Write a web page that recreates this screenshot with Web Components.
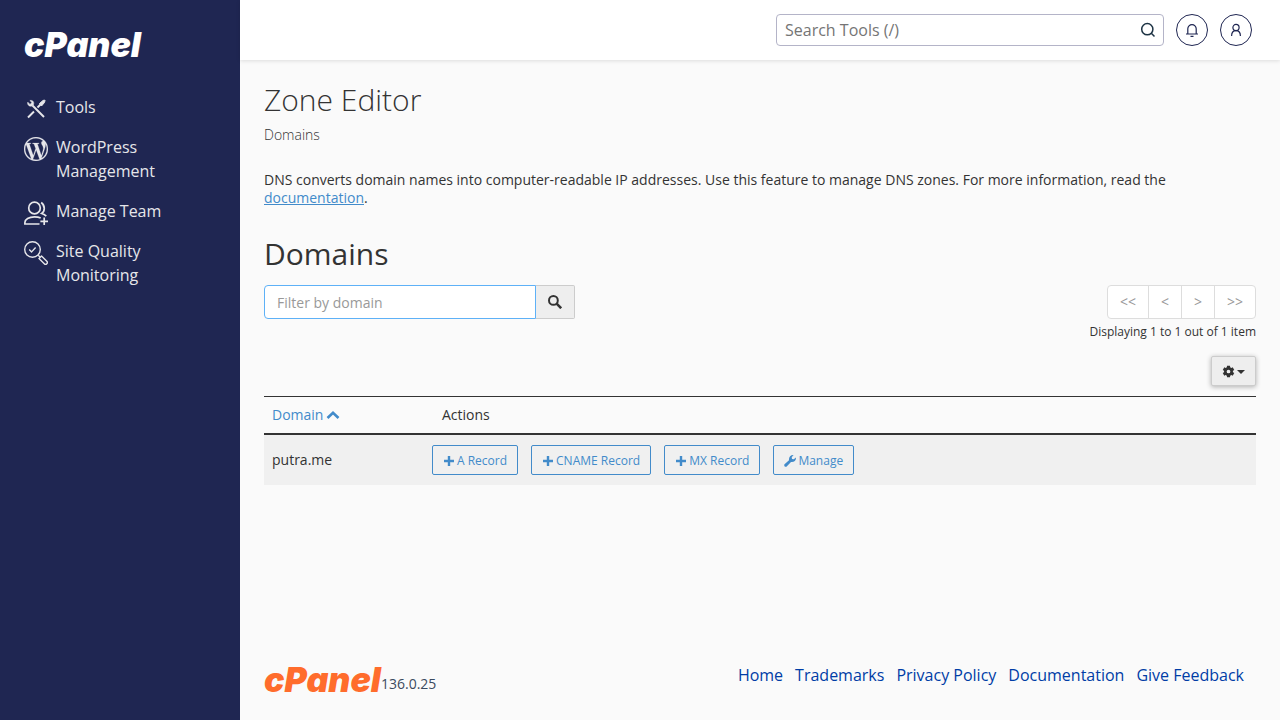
<!DOCTYPE html>
<html lang="en">
<head>
<meta charset="utf-8">
<meta name="viewport" content="width=device-width, initial-scale=1">
<title>cPanel - Zone Editor</title>
<style>
  body {
    margin: 0;
    background: #fafafa;
    color: #333;
    font-family: "Open Sans", "Noto Sans", sans-serif;
    font-size: 14px;
    line-height: 18px;
  }
</style>
</head>
<body>
<app-shell>
  <side-nav slot="nav">
    <nav-item icon="tools" href="#tools">Tools</nav-item>
    <nav-item icon="wordpress" href="#wordpress">WordPress Management</nav-item>
    <nav-item icon="team" href="#team">Manage Team</nav-item>
    <nav-item icon="quality" href="#quality">Site Quality Monitoring</nav-item>
  </side-nav>
  <top-bar slot="header"></top-bar>
  <page-heading heading="Zone Editor" sub="Domains">
    DNS converts domain names into computer-readable IP addresses. Use this feature to manage DNS zones. For more information, read the
    <a slot="link" href="#documentation">documentation</a>
  </page-heading>
  <domain-list></domain-list>
  <page-footer slot="footer" version="136.0.25"></page-footer>
</app-shell>

<script>
/* Icon markup, keyed by name: [viewBox, svg content] */
const ICONS = {
  tools: ["0 0 24 24", `
    <g fill="none" stroke="currentColor" stroke-width="2">
      <path d="M8.500 8.500 20 20"/>
      <path d="M4 20.500 10 14.500"/>
      <path d="M13.500 10.500 17 7"/>
    </g>
    <path d="M15.500 6.500 19 3.500l1.500-.5.500.500-.5 2L17.500 9z" fill="currentColor" stroke="currentColor" stroke-width="1"/>
    <path d="M3.800 5.200 6 7.400 8 5.600 5.900 3.600C8 2.800 10.300 4.500 9.600 7.200 9 9.600 5.500 9.800 4.300 8 3.600 7.100 3.500 6.100 3.800 5.200z" fill="currentColor" stroke="currentColor" stroke-width=".6"/>`],
  wordpress: ["0 0 24 24", `<path fill="currentColor" stroke="currentColor" stroke-width=".2" d="M21.469 6.825c.84 1.537 1.318 3.300 1.318 5.175 0 3.979-2.156 7.456-5.363 9.325l3.295-9.527c.615-1.540.820-2.771.820-3.864 0-.405-.026-.780-.070-1.110m-7.981.105c.647-.030 1.232-.105 1.232-.105.582-.075.514-.930-.067-.899 0 0-1.755.135-2.880.135-1.064 0-2.850-.150-2.850-.150-.585-.030-.661.855-.075.885 0 0 .540.061 1.125.090l1.680 4.605-2.370 7.080L5.354 6.900c.649-.030 1.234-.100 1.234-.100.585-.075.516-.930-.065-.896 0 0-1.746.138-2.874.138-.200 0-.438-.008-.690-.015C4.911 3.150 8.235 1.215 12 1.215c2.809 0 5.365 1.072 7.286 2.833-.046-.003-.091-.009-.141-.009-1.060 0-1.812.923-1.812 1.914 0 .890.513 1.643 1.060 2.531.411.720.890 1.643.890 2.977 0 .915-.354 1.994-.821 3.479l-1.075 3.585-3.900-11.610.001.014zM12 22.784c-1.059 0-2.081-.153-3.048-.437l3.237-9.406 3.315 9.087c.024.053.050.101.078.149-1.120.393-2.325.609-3.582.609M1.211 12c0-1.564.336-3.050.935-4.390L7.290 21.709C3.694 19.960 1.212 16.271 1.211 12M12 0C5.385 0 0 5.385 0 12s5.385 12 12 12 12-5.385 12-12S18.615 0 12 0"/>`],
  team: ["0 0 24 24", `
    <g fill="none" stroke="currentColor" stroke-width="1.700">
      <circle cx="10.500" cy="7" r="5.800"/>
      <path d="M15.500 23H.900v-1.500c0-3.200 4-5.700 9.600-5.700 2.400 0 4.500.400 6.200 1.200"/>
      <path d="M17.200 1.500c4 3 4 8.500.5 11 2 .6 3.300 1.500 4.600 2.700"/>
      <path d="M20.200 16.500V24M16.400 20.300H24"/>
    </g>`],
  quality: ["0 0 24 24", `
    <g fill="none" stroke="currentColor" stroke-width="1.400" stroke-linejoin="round">
      <circle cx="8.500" cy="8.500" r="7.800"/>
      <path d="M5.200 8.600 7.600 10.900 11.600 6.500"/>
      <path d="M14.200 14.200 16 16"/>
      <path d="M15 17.500 17.500 15l5.300 5.300a1.700 1.700 0 0 1-2.500 2.500z"/>
    </g>`],
  search: ["0 0 16 16", `
    <g fill="none" stroke="currentColor" stroke-width="1.500">
      <circle cx="7.300" cy="7.200" r="5.600"/>
      <path d="m11.300 11.300 3.200 3.200"/>
    </g>`],
  bell: ["0 0 16 16", `
    <g fill="none" stroke="currentColor" stroke-width="1.200">
      <path d="M3.800 12V6.800a4.200 4.200 0 0 1 8.400 0V12"/>
      <path d="M2 12h12M6.500 14.300h3"/>
    </g>`],
  user: ["0 0 16 16", `
    <g fill="none" stroke="currentColor" stroke-width="1.200">
      <circle cx="8" cy="5.500" r="3.100"/>
      <path d="M3.600 14c0-3 1.600-5.300 4.400-5.300s4.400 2.300 4.400 5.300"/>
    </g>`],
  filter: ["0 0 14 14", `
    <g fill="none" stroke="currentColor">
      <circle cx="5.400" cy="5.400" r="4.400" stroke-width="2"/>
      <path d="m8.600 8.600 4.600 4.600" stroke-width="2.600"/>
    </g>`],
  cog: ["0 0 14 14", `
    <g fill="currentColor">
      <path d="M5.300.8h3.400v12.400H5.300z"/>
      <path d="M5.300.8h3.400v12.400H5.300z" transform="rotate(60 7 7)"/>
      <path d="M5.300.8h3.400v12.400H5.300z" transform="rotate(120 7 7)"/>
    </g>
    <circle cx="7" cy="7" r="3.400" fill="#eee" stroke="currentColor" stroke-width="2.800"/>`],
  caret: ["0 0 8 4", `<path d="M0 0h8L4 4z" fill="currentColor"/>`],
  up: ["0 0 14 14", `<path d="m1.500 10 5.500-5.300L12.500 10" fill="none" stroke="currentColor" stroke-width="2.600"/>`],
  plus: ["0 0 12 12", `<path d="M6 1v10M1 6h10" fill="none" stroke="currentColor" stroke-width="2.400"/>`],
  wrench: ["0 0 12 12", `<path d="M.500 9.300 5 5.200C4.600 2.300 6.600-.100 9.600.100L7.700 2.200l.300 1.800 1.800.300L11.900 2.400c.500 3-1.800 5.100-4.900 4.600L2.700 11.500C1.300 12.500-.500 10.700.500 9.300z" fill="currentColor"/>`],
};

/**
 * Small helper base: renders template() into an open shadow root.
 */
class BaseElement extends HTMLElement {
  constructor() {
    super();
    this.attachShadow({ mode: "open" });
  }

  connectedCallback() {
    this.shadowRoot.innerHTML = this.template();
  }
}

class UiIcon extends BaseElement {
  template() {
    const [box, body] = ICONS[this.getAttribute("name")];
    return `
      <style>
        :host {
          display: inline-block;
          width: 16px;
          height: 16px;
          flex-shrink: 0;
        }
        svg {
          display: block;
          width: 100%;
          height: 100%;
        }
      </style>
      <svg viewBox="${box}" aria-hidden="true">${body}</svg>
    `;
  }
}

/** cPanel wordmark, coloured by its parent */
class BrandLogo extends BaseElement {
  template() {
    return `
      <style>
        :host {
          display: block;
          font: italic 900 34px/26px Inter, "Open Sans", sans-serif;
        }
      </style>
      cPanel
    `;
  }
}

class AppShell extends BaseElement {
  template() {
    return `
      <style>
        :host {
          display: flex;
          min-height: 100vh;
        }
        .page {
          flex: 1;
          min-width: 0;
          display: flex;
          flex-direction: column;
        }
        main {
          flex: 1;
          padding: 24px 24px 0;
        }
      </style>
      <slot name="nav"></slot>
      <div class="page">
        <slot name="header"></slot>
        <main><slot></slot></main>
        <slot name="footer"></slot>
      </div>
    `;
  }
}

class SideNav extends BaseElement {
  template() {
    return `
      <style>
        :host {
          display: block;
          box-sizing: border-box;
          width: 240px;
          flex-shrink: 0;
          padding: 32px 24px;
          background: #1f2652;
          color: #fff;
        }
        .brand {
          display: block;
          color: inherit;
          text-decoration: none;
        }
        nav {
          display: flex;
          flex-direction: column;
          gap: 16px;
          margin-top: 37px;
        }
      </style>
      <a class="brand" href="#home"><brand-logo></brand-logo></a>
      <nav><slot></slot></nav>
    `;
  }
}

class NavItem extends BaseElement {
  template() {
    return `
      <style>
        :host {
          display: block;
        }
        a {
          display: flex;
          gap: 8px;
          color: #e6e6ea;
          font-size: 16px;
          line-height: 24px;
          text-decoration: none;
        }
        /* icon hangs slightly below the first text line */
        ui-icon {
          width: 24px;
          height: 24px;
          margin: 2px 0 -2px;
        }
      </style>
      <a href="${this.getAttribute("href")}">
        <ui-icon name="${this.getAttribute("icon")}"></ui-icon>
        <span><slot></slot></span>
      </a>
    `;
  }
}

class TopBar extends BaseElement {
  template() {
    return `
      <style>
        :host {
          display: flex;
          justify-content: flex-end;
          align-items: center;
          gap: 12px;
          box-sizing: border-box;
          height: 60px;
          padding: 0 28px;
          background: #fff;
          box-shadow: 0 1px 4px rgba(0, 0, 0, 0.12);
        }
        .search {
          display: flex;
          align-items: center;
          box-sizing: border-box;
          width: 388px;
          height: 32px;
          padding: 0 7px 0 8px;
          border: 1px solid #b4b4c8;
          border-radius: 4px;
          color: #1d3344;
        }
        input {
          flex: 1;
          min-width: 0;
          padding: 0;
          border: 0;
          outline: 0;
          background: none;
          font: inherit;
          font-size: 16px;
          line-height: 24px;
        }
        input::placeholder {
          color: #757575;
        }
        button {
          display: flex;
          align-items: center;
          justify-content: center;
          padding: 0;
          border: 0;
          background: none;
          color: inherit;
        }
        .round {
          width: 32px;
          height: 32px;
          border: 1px solid #1f2652;
          border-radius: 50%;
          background: #fff;
          color: #1f2652;
        }
      </style>
      <div class="search">
        <input type="text" placeholder="Search Tools (/)" aria-label="Search Tools">
        <button type="button" aria-label="Search"><ui-icon name="search"></ui-icon></button>
      </div>
      <button class="round" type="button" aria-label="Notifications"><ui-icon name="bell"></ui-icon></button>
      <button class="round" type="button" aria-label="Account"><ui-icon name="user"></ui-icon></button>
    `;
  }
}

class PageHeading extends BaseElement {
  template() {
    return `
      <style>
        :host {
          display: block;
        }
        h1 {
          margin: 0;
          font-size: 30px;
          font-weight: 300;
          line-height: 32px;
        }
        .sub {
          margin-top: 10px;
          font-weight: 300;
        }
        p {
          margin: 27px 0 0;
        }
        ::slotted(a) {
          color: #428bca;
        }
      </style>
      <h1>${this.getAttribute("heading")}</h1>
      <div class="sub">${this.getAttribute("sub")}</div>
      <p><slot></slot><slot name="link"></slot>.</p>
    `;
  }
}

class DomainList extends BaseElement {
  template() {
    return `
      <style>
        :host {
          display: block;
          margin-top: 30px;
        }
        h2 {
          margin: 0;
          font-size: 30px;
          font-weight: 500;
          line-height: 34px;
        }
        .bar {
          display: flex;
          justify-content: space-between;
          align-items: flex-start;
          margin-top: 14px;
        }
        .settings {
          display: flex;
          justify-content: flex-end;
          margin: 16px 0 10px;
        }
        .settings button {
          display: flex;
          align-items: center;
          gap: 2px;
          height: 30px;
          padding: 0 10px;
          border: 1px solid #ccc;
          border-radius: 2px;
          background: #eee;
          box-shadow: 0 1px 5px rgba(0, 0, 0, 0.3);
          color: #333;
        }
        .settings ui-icon {
          width: 13px;
          height: 13px;
        }
        .settings .caret {
          width: 8px;
          height: 4px;
          margin-top: 2px;
        }
      </style>
      <h2>Domains</h2>
      <div class="bar">
        <domain-filter></domain-filter>
        <list-pager></list-pager>
      </div>
      <div class="settings">
        <button type="button" aria-label="Table settings">
          <ui-icon name="cog"></ui-icon><ui-icon class="caret" name="caret"></ui-icon>
        </button>
      </div>
      <domain-table></domain-table>
    `;
  }
}

class DomainFilter extends BaseElement {
  template() {
    return `
      <style>
        :host {
          display: flex;
          width: 311px;
          height: 34px;
        }
        input {
          flex: 1;
          min-width: 0;
          box-sizing: border-box;
          padding: 7px 12px 5px;
          border: 1px solid #5eb1f7;
          border-radius: 4px 0 0 4px;
          outline: 0;
          background: #fff;
          font: inherit;
        }
        input::placeholder {
          color: #999;
        }
        button {
          display: flex;
          align-items: center;
          justify-content: center;
          width: 39px;
          padding: 0;
          border: 1px solid #ccc;
          border-left: 0;
          border-radius: 0 2px 2px 0;
          background: #eee;
          color: #333;
        }
        ui-icon {
          width: 14px;
          height: 14px;
        }
      </style>
      <input type="text" placeholder="Filter by domain" aria-label="Filter by domain">
      <button type="button" aria-label="Filter"><ui-icon name="filter"></ui-icon></button>
    `;
  }
}

class ListPager extends BaseElement {
  template() {
    const buttons = [["&lt;&lt;", "First"], ["&lt;", "Previous"], ["&gt;", "Next"], ["&gt;&gt;", "Last"]]
      .map(([text, label]) => `<button type="button" disabled aria-label="${label}">${text}</button>`)
      .join("");

    return `
      <style>
        :host {
          display: flex;
          flex-direction: column;
          align-items: flex-end;
          gap: 4px;
        }
        .pages {
          display: flex;
          border: 1px solid #ddd;
          border-radius: 4px;
          background: #fff;
          overflow: hidden;
        }
        button {
          height: 32px;
          padding: 0 12px;
          border: 0;
          background: none;
          color: #999;
          font: inherit;
        }
        button + button {
          border-left: 1px solid #ddd;
        }
        .count {
          font-size: 12px;
          line-height: 17px;
        }
      </style>
      <div class="pages">${buttons}</div>
      <div class="count">Displaying 1 to 1 out of 1 item</div>
    `;
  }
}

class DomainTable extends BaseElement {
  template() {
    return `
      <style>
        :host {
          display: block;
        }
        table {
          width: 100%;
          border-collapse: separate;
          border-spacing: 0;
        }
        th {
          padding: 9px 8px 10px;
          border-top: 1px solid #333;
          border-bottom: 2px solid #333;
          font-weight: 400;
          line-height: 17px;
          text-align: left;
        }
        th:first-child {
          width: 144px;
        }
        th:last-child {
          padding-left: 18px;
        }
        th a {
          display: inline-flex;
          align-items: center;
          gap: 3px;
          color: #428bca;
          text-decoration: none;
        }
        th ui-icon {
          width: 14px;
          height: 14px;
        }
        td {
          padding: 10px 8px;
          background: #f0f0f0;
        }
        .actions {
          display: flex;
          flex-wrap: wrap;
          gap: 13px;
        }
      </style>
      <table>
        <thead>
          <tr>
            <th scope="col" aria-sort="ascending"><a href="#sort">Domain<ui-icon name="up"></ui-icon></a></th>
            <th scope="col">Actions</th>
          </tr>
        </thead>
        <tbody>
          <tr>
            <td>putra.me</td>
            <td>
              <div class="actions">
                <record-action icon="plus">A Record</record-action>
                <record-action icon="plus">CNAME Record</record-action>
                <record-action icon="plus">MX Record</record-action>
                <record-action icon="wrench">Manage</record-action>
              </div>
            </td>
          </tr>
        </tbody>
      </table>
    `;
  }
}

class RecordAction extends BaseElement {
  template() {
    return `
      <style>
        :host {
          display: block;
        }
        button {
          display: flex;
          align-items: center;
          gap: 2px;
          height: 30px;
          padding: 2px 10px 0;
          border: 1px solid #428bca;
          border-radius: 2px;
          background: none;
          color: #428bca;
          font: inherit;
          font-size: 12px;
        }
        ui-icon {
          width: 12px;
          height: 12px;
        }
      </style>
      <button type="button"><ui-icon name="${this.getAttribute("icon")}"></ui-icon><slot></slot></button>
    `;
  }
}

class PageFooter extends BaseElement {
  template() {
    const links = ["Home", "Trademarks", "Privacy Policy", "Documentation", "Give Feedback"]
      .map((text) => `<a href="#${text.toLowerCase().replace(" ", "-")}">${text}</a>`)
      .join("");

    return `
      <style>
        :host {
          display: flex;
          justify-content: space-between;
          align-items: flex-start;
          padding: 0 36px 27px 24px;
        }
        .brand {
          display: flex;
          align-items: flex-end;
          padding-top: 4px;
          color: #3a4a5e;
        }
        brand-logo {
          color: #ff6c2c;
        }
        nav {
          display: flex;
          flex-wrap: wrap;
          gap: 12px;
        }
        a {
          color: #003da6;
          font-size: 16px;
          line-height: 24px;
          text-decoration: none;
        }
      </style>
      <div class="brand"><brand-logo></brand-logo><span>${this.getAttribute("version")}</span></div>
      <nav>${links}</nav>
    `;
  }
}

customElements.define("ui-icon", UiIcon);
customElements.define("brand-logo", BrandLogo);
customElements.define("app-shell", AppShell);
customElements.define("side-nav", SideNav);
customElements.define("nav-item", NavItem);
customElements.define("top-bar", TopBar);
customElements.define("page-heading", PageHeading);
customElements.define("domain-list", DomainList);
customElements.define("domain-filter", DomainFilter);
customElements.define("list-pager", ListPager);
customElements.define("domain-table", DomainTable);
customElements.define("record-action", RecordAction);
customElements.define("page-footer", PageFooter);
</script>
</body>
</html>
